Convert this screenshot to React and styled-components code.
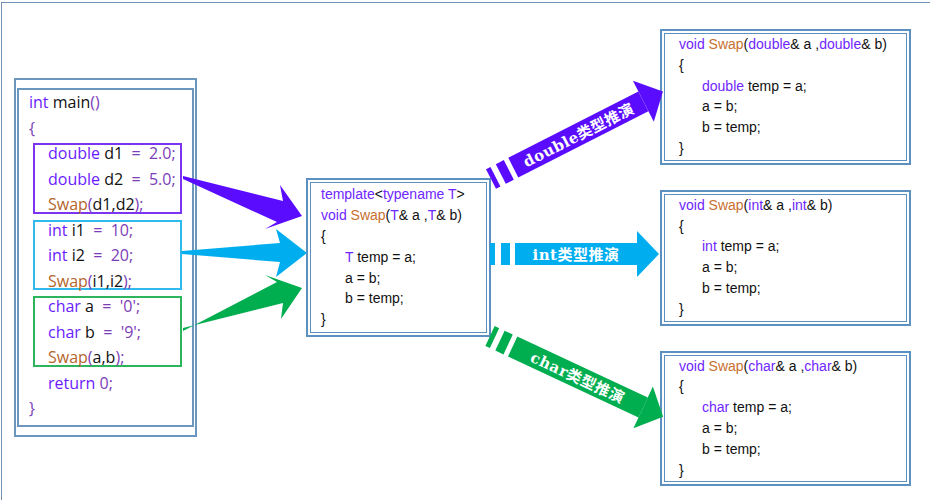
import React from 'react';
import styled, { createGlobalStyle } from 'styled-components';

const GlobalStyle = createGlobalStyle`
  body {
    margin: 0;
    background: #fff;
  }
`;

const leftColors = {
  kw: '#6a1cff',
  op: '#7b3db8',
  fn: '#b4652c',
  id: '#111',
};

const boxColors = {
  kw: '#7026ff',
  op: '#111',
  fn: '#c8702f',
  id: '#111',
};

const Canvas = styled.div`
  position: relative;
  width: 930px;
  height: 500px;
  overflow: hidden;
`;

const Frame = styled.div`
  box-sizing: border-box;
  margin: 2px 0 0 1px;
  height: 498px;
  border-top: 1px solid #7391b4;
  border-left: 1px solid #7391b4;
`;

const Row = styled.div`
  display: flex;
  align-items: center;
  padding: 26px 0 0 12px;
`;

const MainPanel = styled.div`
  box-sizing: border-box;
  width: 183px;
  margin-right: 109px;
  padding: 8px 1px;
  border: 2px solid #6b97bf;
`;

const MainInner = styled.div`
  border: 2px solid #6b97bf;
  padding: 0 0 3px 10px;
  font-family: 'Open Sans', 'Noto Sans', sans-serif;
  font-size: 16px;
  line-height: 25.5px;
`;

const Group = styled.div`
  position: relative;

  &::before {
    content: '';
    position: absolute;
    top: 2px;
    bottom: 4px;
    left: 4px;
    right: 10px;
    border: 2px solid ${(p) => p.$color};
  }
`;

const Line = styled.div`
  position: relative;
  white-space: pre;
  padding-left: ${(p) => p.$indent || 0}px;
`;

const Tok = styled.span`
  color: ${(p) => p.$color};
`;

const CodeBox = styled.div`
  box-sizing: border-box;
  width: ${(p) => p.$width}px;
  padding: 2px;
  border: 2px solid #5c90c1;
  margin-right: ${(p) => p.$gapRight || 0}px;
`;

const CodeInner = styled.div`
  border: 1px solid #5c90c1;
  padding: ${(p) => p.$pad};
  font-family: 'Liberation Sans', Arial, sans-serif;
  font-size: 14px;
  line-height: 20.8px;
`;

const RightColumn = styled.div`
  display: flex;
  flex-direction: column;
  gap: 25px;
`;

const ArrowLayer = styled.svg`
  position: absolute;
  top: 0;
  left: 0;
  pointer-events: none;
`;

const ArrowLabel = styled.text`
  fill: #fff;
  font-family: 'DejaVu Serif', 'Noto Sans CJK SC', serif;
  font-weight: bold;
  font-size: 15px;
  letter-spacing: 0.5px;
`;

function CodeLines({ lines, colors, indent }) {
  return lines.map((line, i) => (
    <Line key={i} $indent={line.indent ? indent : 0}>
      {line.toks.map(([kind, text], j) => (
        <Tok key={j} $color={colors[kind]}>
          {text}
        </Tok>
      ))}
    </Line>
  ));
}

const mainGroups = [
  {
    color: '#7b35f2',
    lines: [
      [['kw', 'double'], ['id', ' d1'], ['op', '  =  2.0;']],
      [['kw', 'double'], ['id', ' d2'], ['op', '  =  5.0;']],
      [['fn', 'Swap'], ['op', '('], ['id', 'd1,d2'], ['op', ');']],
    ],
  },
  {
    color: '#2fb9ec',
    lines: [
      [['kw', 'int'], ['id', ' i1'], ['op', '  =  10;']],
      [['kw', 'int'], ['id', ' i2'], ['op', '  =  20;']],
      [['fn', 'Swap'], ['op', '('], ['id', 'i1,i2'], ['op', ');']],
    ],
  },
  {
    color: '#2db45c',
    lines: [
      [['kw', 'char'], ['id', ' a'], ['op', "  =  '0';"]],
      [['kw', 'char'], ['id', ' b'], ['op', "  =  '9';"]],
      [['fn', 'Swap'], ['op', '('], ['id', 'a,b'], ['op', ');']],
    ],
  },
];

const swapBody = (typeTok) => [
  { toks: [['id', '{']] },
  { indent: true, toks: [typeTok, ['id', ' temp = a;']] },
  { indent: true, toks: [['id', 'a = b;']] },
  { indent: true, toks: [['id', 'b = temp;']] },
  { toks: [['id', '}']] },
];

const templateLines = [
  { toks: [['kw', 'template'], ['id', '<'], ['kw', 'typename T'], ['id', '>']] },
  {
    toks: [
      ['kw', 'void '],
      ['fn', 'Swap'],
      ['id', '('],
      ['kw', 'T'],
      ['id', '& a ,'],
      ['kw', 'T'],
      ['id', '& b)'],
    ],
  },
  ...swapBody(['kw', 'T']),
];

const typedLines = (type) => [
  {
    toks: [
      ['kw', 'void '],
      ['fn', 'Swap'],
      ['id', '('],
      ['kw', type],
      ['id', '& a ,'],
      ['kw', type],
      ['id', '& b)'],
    ],
  },
  ...swapBody(['kw', type]),
];

function FlowArrow({ x, y, angle, length, color, label }) {
  const bandEnd = length - 22;
  return (
    <g transform={`translate(${x} ${y}) rotate(${angle})`} fill={color}>
      <rect x="0" y="-11" width="5" height="22" />
      <rect x="11" y="-11" width="9" height="22" />
      <rect x="25" y="-11" width={bandEnd - 25} height="22" />
      <polygon points={`${bandEnd},-23 ${length},0 ${bandEnd},23`} />
      <ArrowLabel x={(25 + bandEnd) / 2} y="1" textAnchor="middle" dominantBaseline="central">
        {label}
      </ArrowLabel>
    </g>
  );
}

export default function App() {
  return (
    <Canvas>
      <GlobalStyle />
      <Frame>
        <Row>
          <MainPanel>
            <MainInner>
              <CodeLines
                colors={leftColors}
                lines={[
                  { toks: [['kw', 'int'], ['id', ' main'], ['op', '()']] },
                  { toks: [['op', '{']] },
                ]}
              />
              {mainGroups.map((g, i) => (
                <Group key={i} $color={g.color}>
                  <CodeLines
                    colors={leftColors}
                    indent={19}
                    lines={g.lines.map((toks) => ({ indent: true, toks }))}
                  />
                </Group>
              ))}
              <CodeLines
                colors={leftColors}
                indent={19}
                lines={[
                  { indent: true, toks: [['kw', 'return'], ['op', ' 0;']] },
                  { toks: [['op', '}']] },
                ]}
              />
            </MainInner>
          </MainPanel>

          <CodeBox $width={185} $gapRight={169}>
            <CodeInner $pad="1px 0 2px 10px">
              <CodeLines lines={templateLines} colors={boxColors} indent={24} />
            </CodeInner>
          </CodeBox>

          <RightColumn>
            {['double', 'int', 'char'].map((type) => (
              <CodeBox key={type} $width={251}>
                <CodeInner $pad="0 0 1px 14px">
                  <CodeLines lines={typedLines(type)} colors={boxColors} indent={23} />
                </CodeInner>
              </CodeBox>
            ))}
          </RightColumn>
        </Row>
      </Frame>

      <ArrowLayer width="930" height="500" viewBox="0 0 930 500">
        <polygon
          fill="#5a0cff"
          points="183,176 283,201 280,185 302,216 265,229 277,222 183,179"
        />
        <polygon
          fill="#00aeef"
          points="182,251 280,243 276,229 307,253 276,277 280,262 182,254"
        />
        <polygon
          fill="#00ad4f"
          points="183,328 283,303 281,319 302,288 265,275 277,282 183,331"
        />

        <FlowArrow x={491} y={179} angle={-27} length={193} color="#5a0cff" label="double类型推演" />
        <FlowArrow x={490} y={254} angle={0} length={169} color="#00aeef" label="int类型推演" />
        <FlowArrow x={490} y={336} angle={25} length={191} color="#00ad4f" label="char类型推演" />
      </ArrowLayer>
    </Canvas>
  );
}
